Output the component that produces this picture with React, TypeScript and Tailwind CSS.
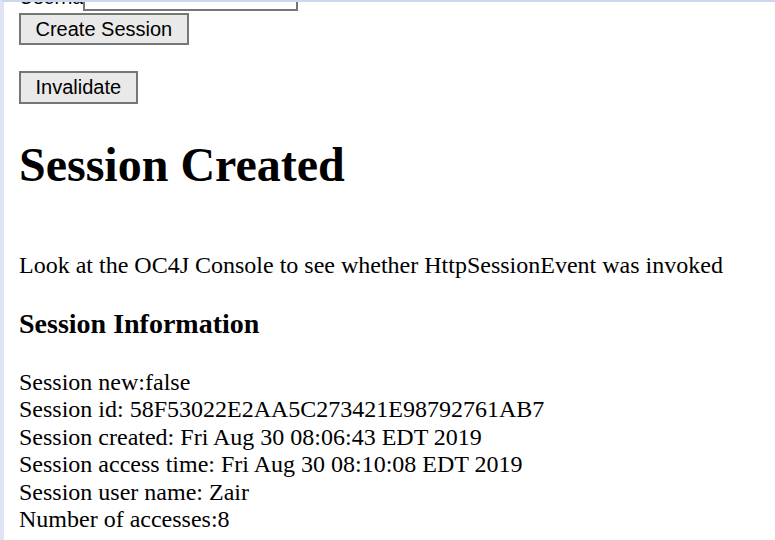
export default function App() {
  const info = [
    'Session new:false',
    'Session id: 58F53022E2AA5C273421E98792761AB7',
    'Session created: Fri Aug 30 08:06:43 EDT 2019',
    'Session access time: Fri Aug 30 08:10:08 EDT 2019',
    'Session user name: Zair',
    'Number of accesses:8',
  ];

  return (
    <div className="h-[540px] w-[775px] overflow-hidden bg-white border-l-4 border-l-[#dfe4f4] border-t-2 border-t-[#cbd8ee] font-['Liberation_Serif',serif] text-black">
      <div className="pl-[15px]">
        {/* login form, scrolled partly out of view */}
        <div className="-mt-[24px] flex items-end">
          <span className="mb-[2px] w-[64px] text-[20px] leading-[23px] font-['Liberation_Sans',sans-serif]">Username:</span>
          <div className="h-[33px] w-[215px] border-2 border-[#767676] bg-white" />
        </div>
        <button className="mt-[2px] block h-[32px] border-2 border-[#767676] bg-[#e9e9e9] px-[14.5px] text-[20px] leading-[23px] font-['Liberation_Sans',sans-serif]">
          Create Session
        </button>

        <button className="mt-[26px] block h-[33px] border-2 border-[#767676] bg-[#e9e9e9] px-[14.5px] text-[20px] leading-[23px] font-['Liberation_Sans',sans-serif]">
          Invalidate
        </button>

        <h1 className="mt-[33px] text-[48px] leading-[55px] font-bold">Session Created</h1>

        <p className="mt-[60px] text-[24px] leading-[27.5px]">
          Look at the OC4J Console to see whether HttpSessionEvent was invoked
        </p>

        <h3 className="mt-[28px] text-[28px] leading-[32px] font-bold">Session Information</h3>

        <div className="mt-[29px] text-[24px] leading-[27.6px]">
          {info.map((line) => (
            <div key={line}>{line}</div>
          ))}
        </div>
      </div>
    </div>
  );
}
